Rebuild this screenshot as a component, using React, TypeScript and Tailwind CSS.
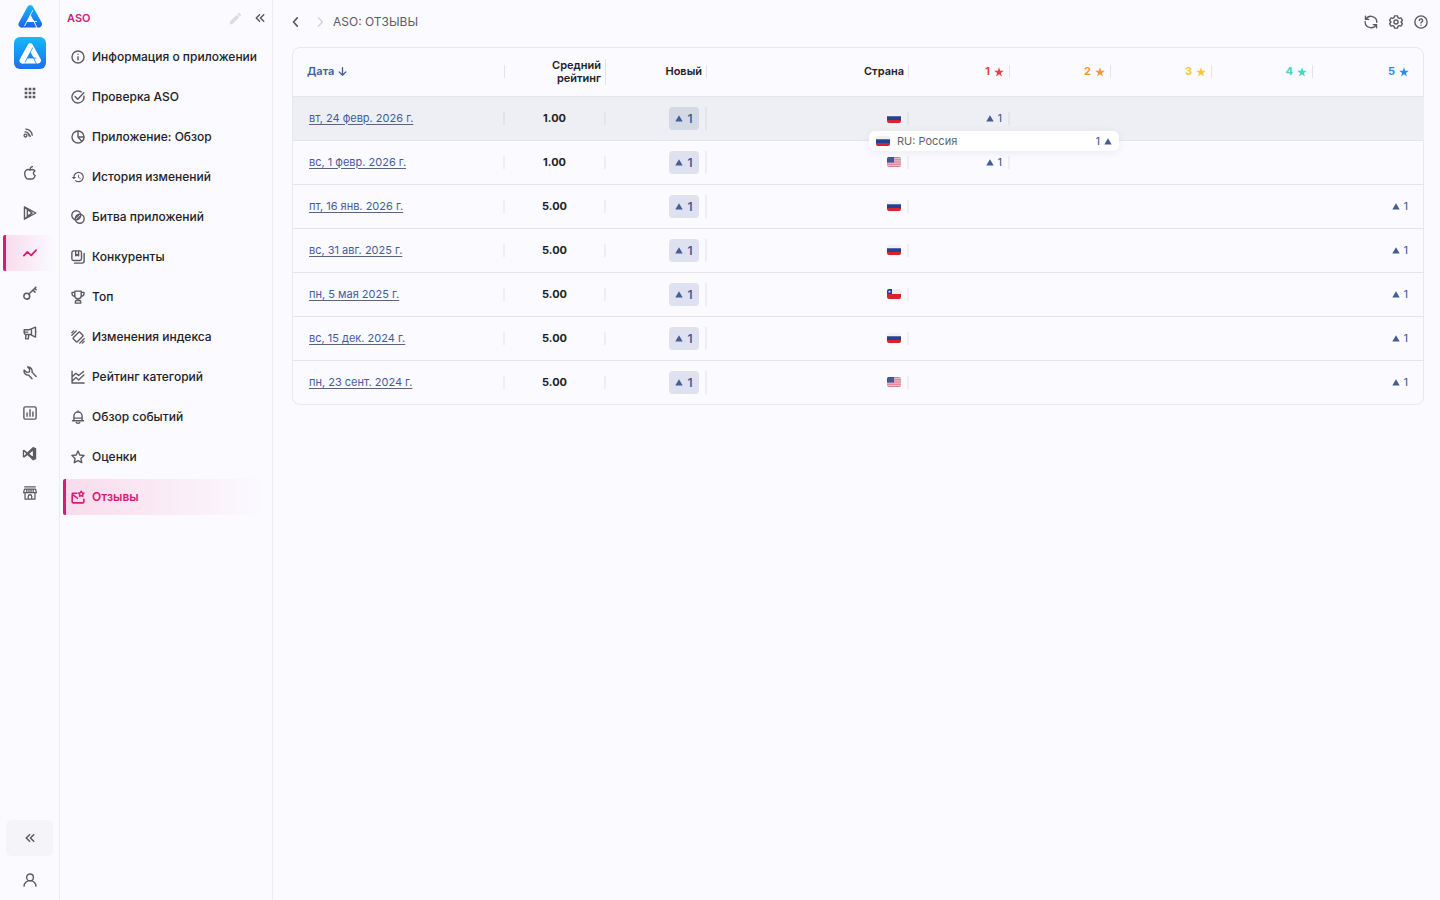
import React from "react";
import { MdHistory, MdApps, MdEdit } from "react-icons/md";
import { DiVisualstudio } from "react-icons/di";

type IconProps = { className?: string; children: React.ReactNode; width?: number };

function Icon({ className = "size-[14px]", children, width = 2.4 }: IconProps) {
  return (
    <svg
      viewBox="0 0 24 24"
      className={`${className} shrink-0`}
      fill="none"
      stroke="currentColor"
      strokeWidth={width}
      strokeLinecap="round"
      strokeLinejoin="round"
      aria-hidden="true"
    >
      {children}
    </svg>
  );
}

const navItems: { label: string; icon: React.ReactNode; active?: boolean }[] = [
  {
    label: "Информация о приложении",
    icon: (
      <Icon>
        <circle cx="12" cy="12" r="10.3" />
        <path d="M12 11.500v5.500M12 7v.4" />
      </Icon>
    ),
  },
  {
    label: "Проверка ASO",
    icon: (
      <Icon>
        <path d="M22.2 10.5A10.3 10.3 0 1 1 17.5 3.3" />
        <path d="m7 11 4.5 4.8L22 4.8" />
      </Icon>
    ),
  },
  {
    label: "Приложение: Обзор",
    icon: (
      <Icon>
        <circle cx="12" cy="12" r="10.3" />
        <path d="M12 2v10l6.500 7.500M12 12h10" />
      </Icon>
    ),
  },
  { label: "История изменений", icon: <MdHistory className="size-[14px] shrink-0" /> },
  {
    label: "Битва приложений",
    icon: (
      <Icon width={2.400}>
        <circle cx="9" cy="9" r="7.600" />
        <circle cx="15" cy="15" r="7.600" />
        <path d="m9 13 4-4M11.500 15l3.500-3.500" />
      </Icon>
    ),
  },
  {
    label: "Конкуренты",
    icon: (
      <Icon>
        <rect x="1.500" y="1.500" width="16.500" height="16.500" rx="3" />
        <path d="M22.500 6v13a3.500 3.500 0 0 1-3.500 3.500H6M8 2v8l2.500-2 2.500 2V2" />
      </Icon>
    ),
  },
  {
    label: "Топ",
    icon: (
      <Icon>
        <path d="M6.500 2h11v7.500a5.500 5.500 0 0 1-11 0zM6.500 4H1.800v2.500A4.500 4.500 0 0 0 7 11M17.500 4h4.700v2.500A4.500 4.500 0 0 1 17 11M12 15v3M7.500 22.500v-2.500a2 2 0 0 1 2-2h5a2 2 0 0 1 2 2v2.500z" />
      </Icon>
    ),
  },
  {
    label: "Изменения индекса",
    icon: (
      <Icon>
        <path d="M12.800 4.300a2 2 0 0 1 2.800 0l4.200 4.200a2 2 0 0 1 0 2.800l-8.500 8.500a2 2 0 0 1-2.800 0l-4.200-4.200a2 2 0 0 1 0-2.800zM1.500 9 9 1.500M1.500 4.500l3-3M15 22.500l7.500-7.500M19.500 22.500l3-3" />
      </Icon>
    ),
  },
  {
    label: "Рейтинг категорий",
    icon: (
      <Icon>
        <path d="M1.800 2v20.200H22.500M2.500 11l6-5.500 4.500 4L21.500 2.500M2.500 18.500l6-5.500 4.500 4 9-8.500" />
      </Icon>
    ),
  },
  {
    label: "Обзор событий",
    icon: (
      <Icon>
        <path d="M12 1.500v2M5 18v-7.500a7 7 0 0 1 14 0V18M2.500 18.500h19M5.500 14h13M9 21.500c1.500 1.500 4.500 1.500 6 0" />
      </Icon>
    ),
  },
  {
    label: "Оценки",
    icon: (
      <Icon>
        <path d="m12 1.800 3.100 6.700 7.300.9-5.400 5 1.400 7.300L12 18.100l-6.400 3.600L7 14.400l-5.400-5 7.300-.9z" />
      </Icon>
    ),
  },
  {
    label: "Отзывы",
    active: true,
    icon: (
      <Icon width={2.800}>
        <path d="M2 9.500V20a2 2 0 0 0 2 2h16a2 2 0 0 0 2-2v-4M10 5.500H3.500C2 5.500 1.500 7 2.800 8L11 14" />
        <path
          d="m17.500 2 1.500 2.700 3.300.6-2.300 2.400.4 3.300-2.900-1.400-2.900 1.400.4-3.300-2.300-2.400 3.300-.6z"
          strokeWidth="2.400"
        />
      </Icon>
    ),
  },
];

const railItems: { label: string; icon: React.ReactNode; active?: boolean }[] = [
  { label: "Приложения", icon: <MdApps className="size-4" /> },
  {
    label: "Лента",
    icon: (
      <Icon className="mr-1 size-[10px]" width={3.200}>
        <circle cx="6" cy="18" r="3.500" />
        <path d="M5 9.500A9 9 0 0 1 14.500 19M7 2.500A15.500 15.500 0 0 1 22 17.500M13 13l4.500 7" />
      </Icon>
    ),
  },
  {
    label: "App Store",
    icon: (
      <Icon>
        <path d="M12 7c-2-1.200-5-1.500-7 .5-3.500 3.500-2 10 .8 13.500 2 2.200 3.700 1.200 6.200 1.200s4.200 1 6.200-1.200c1.200-1.300 2.100-3 2.600-4.500-3.800-1.800-3.800-6.500-.3-8.200C18.500 5.700 14.500 5.800 12 7zM12 6c0-2.500 1.500-4.500 4-5" />
      </Icon>
    ),
  },
  {
    label: "Google Play",
    icon: (
      <Icon>
        <path d="M2.500 1.500v21L22 12zM3 2l12.500 10L3 22M7.500 6.500v11L15.500 12" />
      </Icon>
    ),
  },
  {
    label: "ASO",
    active: true,
    icon: (
      <Icon width={3}>
        <path d="m1.500 16.500 6-6.500 6.500 6 8.500-9" />
      </Icon>
    ),
  },
  {
    label: "Ключевые слова",
    icon: (
      <Icon width={2.600}>
        <circle cx="6.500" cy="17.500" r="5" />
        <path d="M10.200 13.800 22 2M17 7l3.500 3.500M20 4l2.500 2.500" />
      </Icon>
    ),
  },
  {
    label: "Реклама",
    icon: (
      <Icon>
        <path d="M2 6.500h8L21.500 2v17L12 14.500H5a3 3 0 0 1-3-3zM5 14.500 4.500 22H9l1-7.500M14.500 6v8.500M2 10.500h6M21.500 10h1" />
      </Icon>
    ),
  },
  {
    label: "Инструменты",
    icon: (
      <Icon>
        <path d="M15.500 22 9.500 15.500A6.800 6.800 0 0 1 2 7l4.500 4 4.500-1 .5-4.500L8 1.800a7 7 0 0 1 7.500 8.700l7 7.500" />
      </Icon>
    ),
  },
  {
    label: "Отчёты",
    icon: (
      <Icon>
        <rect x="1.500" y="1.500" width="21" height="21" rx="2.500" />
        <path d="M7 12v5.500M12 6.500v11M17 10v7.500" />
      </Icon>
    ),
  },
  { label: "Разработка", icon: <DiVisualstudio className="size-[19px]" /> },
  {
    label: "Магазин",
    icon: (
      <Icon width={2.200}>
        <path d="M3 1.500h18M2.500 5.500h19L23 11.500H1zM6.500 6v5M10.200 6v5M13.800 6v5M17.500 6v5M3.500 12v10.500h17V12M9 22v-4a3 3 0 0 1 6 0v4" />
      </Icon>
    ),
  },
];

function Logo({ fill, gap, className }: { fill: string; gap: string; className: string }) {
  return (
    <svg viewBox="0 0 48 46" className={className} fill="none" strokeLinecap="round" aria-hidden="true">
      <defs>
        <linearGradient id="logo-blue" gradientUnits="userSpaceOnUse" x1="0" y1="0" x2="0" y2="46">
          <stop offset="0" stopColor="#16b9fb" />
          <stop offset="1" stopColor="#1a63f2" />
        </linearGradient>
      </defs>
      <path d="M25 7 42 38" stroke={fill} strokeWidth="12" />
      <path d="M8 39h30" stroke={gap} strokeWidth="14" strokeLinecap="butt" />
      <path d="M8 39.500h33" stroke={fill} strokeWidth="11" />
      <path d="M24 7 7 39" stroke={gap} strokeWidth="15" strokeLinecap="butt" />
      <path d="M24 7 7 38.500" stroke={fill} strokeWidth="12" />
      <path d="m31 31 7 15" stroke={gap} strokeWidth="2" />
    </svg>
  );
}

function ChevronsLeft({ className }: { className: string }) {
  return (
    <Icon className={className} width={3.600}>
      <path d="m11 4-8 8 8 8M21 4l-8 8 8 8" />
    </Icon>
  );
}

function Flag({ code }: { code: string }) {
  return (
    <svg viewBox="0 0 14 10" className="h-[10px] w-[14px] shrink-0 rounded-xs" role="img" aria-label={code}>
      {code === "RU" && (
        <>
          <path fill="#f1f1f4" d="M0 0h14v3.300H0z" />
          <path fill="#24419a" d="M0 3.300h14v3.600H0z" />
          <path fill="#d8232c" d="M0 6.900h14V10H0z" />
        </>
      )}
      {code === "US" && (
        <>
          <path fill="#eecbd3" d="M0 0h14v10H0z" />
          <path stroke="#d56a7d" strokeWidth=".8" d="M0 .5h14M0 2.300h14M0 4.100h14M0 5.900h14M0 7.700h14M0 9.500h14" />
          <path fill="#3d4f8d" d="M0 0h7v5.500H0z" />
          <path stroke="#8c98c0" strokeWidth=".5" strokeDasharray=".6 .9" d="M.8 1.400h6M1.400 2.800h5.400M.8 4.200h6" />
        </>
      )}
      {code === "CL" && (
        <>
          <path fill="#ececf1" d="M0 0h14v5H0z" />
          <path fill="#d8232c" d="M0 5h14v5H0z" />
          <path fill="#24419a" d="M0 0h5v5H0z" />
          <path fill="#fff" d="m2.500 1.200.4 1h1l-.8.7.3 1-.9-.6-.9.6.3-1-.8-.7h1z" />
        </>
      )}
    </svg>
  );
}

function Up() {
  return (
    <svg viewBox="0 0 8 7" className="h-[7px] w-2 shrink-0" fill="#435d9b" aria-hidden="true">
      <path d="M4 .3 7.700 6.600H.3z" />
    </svg>
  );
}

function Star() {
  return (
    <svg viewBox="0 0 24 24" className="size-[10px] shrink-0" fill="currentColor" aria-hidden="true">
      <path d="m12 .8 2.800 8.100 8.700.2-6.900 5.200 2.500 8.300L12 17.600l-7.100 5 2.500-8.300L.5 9.100l8.700-.2z" />
    </svg>
  );
}

const stars = [
  { n: 1, color: "text-[#ea3f46]" },
  { n: 2, color: "text-[#fb9433]" },
  { n: 3, color: "text-[#fdc72b]" },
  { n: 4, color: "text-[#3fd8c3]" },
  { n: 5, color: "text-[#2f8af5]" },
];

const rows = [
  { date: "вт, 24 февр. 2026 г.", avg: 1, code: "RU", hover: true },
  { date: "вс, 1 февр. 2026 г.", avg: 1, code: "US" },
  { date: "пт, 16 янв. 2026 г.", avg: 5, code: "RU" },
  { date: "вс, 31 авг. 2025 г.", avg: 5, code: "RU" },
  { date: "пн, 5 мая 2025 г.", avg: 5, code: "CL" },
  { date: "вс, 15 дек. 2024 г.", avg: 5, code: "RU" },
  { date: "пн, 23 сент. 2024 г.", avg: 5, code: "US" },
];

function HeadCell({ children, className = "justify-end" }: { children: React.ReactNode; className?: string }) {
  return (
    <th scope="col" className="p-0 font-semibold">
      <div className={`flex items-center gap-1 border-r border-[#e3e3e9] pr-1 text-right ${className}`}>{children}</div>
    </th>
  );
}

function Cell({ children, className = "justify-end" }: { children: React.ReactNode; className?: string }) {
  return (
    <td className="p-0">
      <div className={`flex min-h-[13px] items-center gap-1 border-r-2 border-[#1c1f3a]/5 ${className}`}>{children}</div>
    </td>
  );
}

export default function App() {
  return (
    <div className="flex min-h-screen bg-[#fafaff] font-['Inter',sans-serif] text-[#212226]">
      <aside className="flex w-[60px] shrink-0 flex-col items-center border-r border-[#ececf2] text-[#5b5c62]">
        <a href="#" aria-label="Главная" className="mt-[5px]">
          <Logo fill="url(#logo-blue)" gap="#fafaff" className="h-[23px] w-6" />
        </a>
        <button
          aria-label="Текущее приложение"
          className="mt-[9px] flex size-8 items-center justify-center rounded-md bg-linear-to-b from-[#19b8f8] to-[#1c70ee]"
        >
          <Logo fill="#ffffff" gap="#1c92f4" className="h-[21px] w-[22px]" />
        </button>
        <nav aria-label="Разделы" className="mt-[6px] flex w-full flex-col gap-1 pr-[5px] pl-[3px]">
          {railItems.map((item) => (
            <a
              key={item.label}
              href="#"
              aria-label={item.label}
              className={`flex h-9 items-center justify-center border-l-[3px] pr-px ${
                item.active
                  ? "rounded-l-xs border-[#d81b74] bg-linear-to-r from-[#f9dcec] to-[#fafaff] text-[#d81b74]"
                  : "border-transparent"
              }`}
            >
              {item.icon}
            </a>
          ))}
        </nav>
        <button
          aria-label="Свернуть панель"
          className="mt-auto flex h-9 w-[47px] items-center justify-center rounded-md bg-[#f4f4f9]"
        >
          <ChevronsLeft className="size-[10px]" />
        </button>
        <button aria-label="Профиль" className="mt-[17px] mb-[13px]">
          <Icon>
            <circle cx="12" cy="7.500" r="5.800" />
            <path d="M1.800 22.500a10.200 9.500 0 0 1 20.400 0" />
          </Icon>
        </button>
      </aside>

      <aside className="w-[213px] shrink-0 border-r border-[#ececf2]">
        <div className="flex h-9 items-center pr-[7px] pl-[7px]">
          <h2 className="flex-1 text-[11px] font-semibold text-[#d81b74]">ASO</h2>
          <button aria-label="Редактировать" className="text-[#dcdce0]">
            <MdEdit className="size-[15px]" />
          </button>
          <button aria-label="Свернуть меню" className="ml-3 text-[#5b5c62]">
            <ChevronsLeft className="size-[10px]" />
          </button>
        </div>
        <nav aria-label="ASO" className="mt-[3px] flex flex-col gap-[4px] pr-2 pl-[3px]">
          {navItems.map((item) => (
            <a
              key={item.label}
              href="#"
              aria-current={item.active ? "page" : undefined}
              className={`flex h-9 items-center gap-[7px] border-l-[3px] pl-[5px] text-[12px] whitespace-nowrap ${
                item.active
                  ? "rounded-l-xs border-[#d81b74] bg-linear-to-r from-[#f9dcec] to-[#fafaff] font-semibold text-[#d81b74]"
                  : "border-transparent font-medium"
              }`}
            >
              <span className={item.active ? "" : "text-[#5b5c62]"}>{item.icon}</span>
              {item.label}
            </a>
          ))}
        </nav>
      </aside>

      <main className="min-w-0 flex-1 pr-4 pl-[19px]">
        <header className="-mr-1 flex h-[47px] items-center pb-1 text-[#5b5c62]">
          <button aria-label="Назад" className="-ml-px">
            <Icon className="size-[10px]" width={4}>
              <path d="m15 2-9 10 9 10" />
            </Icon>
          </button>
          <span className="ml-[14px] text-[#d3d3d9]">
            <Icon className="size-[10px]" width={3.400}>
              <path d="m8 2 10 10L8 22" />
            </Icon>
          </span>
          <h1 className="ml-2 flex-1 text-[12px]">ASO: ОТЗЫВЫ</h1>
          <div className="flex gap-[11px]">
            <button aria-label="Обновить">
              <Icon>
                <path d="M2.500 2v5.500H8M3.500 7A10 10 0 0 1 22 12.500M21.500 22v-5.500H16M20.500 17A10 10 0 0 1 2 11.500" />
              </Icon>
            </button>
            <button aria-label="Настройки">
              <Icon>
                <path d="M9.500 1.500h5l.8 3 2.200 1.300 3-.8L23 9.300 20.800 11.500v1L23 14.700 20.500 19l-3-.8-2.200 1.300-.8 3h-5l-.8-3-2.200-1.300-3 .8L1 14.700l2.200-2.200v-1L1 9.300 3.500 5l3 .8 2.200-1.300z" />
                <circle cx="12" cy="12" r="3.500" />
              </Icon>
            </button>
            <button aria-label="Помощь">
              <Icon>
                <circle cx="12" cy="12" r="10.500" />
                <path d="M9.200 9.500a2.800 2.800 0 1 1 4.300 2.400c-1 .6-1.500 1-1.500 2M12 17.300v.2" />
              </Icon>
            </button>
          </div>
        </header>

        <div className="rounded-lg border border-[#e8e8ee]">
          <table className="w-full table-fixed border-collapse text-[11px]">
            <colgroup>
              <col className="w-[212px]" />
              <col className="w-[101px]" />
              <col className="w-[101px]" />
              <col className="w-[202px]" />
              <col className="w-[101px]" />
              <col className="w-[101px]" />
              <col className="w-[101px]" />
              <col className="w-[101px]" />
              <col className="w-[111px]" />
            </colgroup>
            <thead>
              <tr className="h-12 border-b border-[#e4e4ea] leading-[13px]">
                <HeadCell className="text-[#435d9b]">
                  <button className="pl-[14px]">Дата</button>
                  <Icon className="size-[9px]" width={3.500}>
                    <path d="M12 2v20M3 13l9 9 9-9" />
                  </Icon>
                </HeadCell>
                <HeadCell>
                  Средний
                  <br />
                  рейтинг
                </HeadCell>
                <HeadCell>Новый</HeadCell>
                <HeadCell>Страна</HeadCell>
                {stars.map((s) => (
                  <th key={s.n} scope="col" className="p-0 font-bold">
                    <div
                      className={`flex items-center justify-end gap-1 ${s.color} ${
                        s.n === 5 ? "pr-[15px]" : "border-r border-[#e3e3e9] pr-[5px]"
                      }`}
                    >
                      {s.n} <Star />
                    </div>
                  </th>
                ))}
              </tr>
            </thead>
            <tbody>
              {rows.map((row) => (
                <tr
                  key={row.date}
                  className={`h-11 border-b border-[#e4e4ea] leading-[13px] last:border-b-0 ${row.hover ? "bg-[#eeeff4]" : ""}`}
                >
                  <Cell className="pl-4">
                    <a
                      href="#"
                      className="text-[#435d9b] underline decoration-[#5b6480] decoration-1 underline-offset-2"
                    >
                      {row.date}
                    </a>
                  </Cell>
                  <Cell className="justify-center font-bold">{row.avg.toFixed(2)}</Cell>
                  <Cell className="justify-end pr-[6px]">
                    <span className="flex h-[23px] w-[30px] items-center justify-center gap-1 rounded bg-[#435d9b]/15 text-[12px] font-semibold text-[#435d9b]">
                      <Up />1
                    </span>
                  </Cell>
                  <Cell className="justify-end pr-[6px]">
                    <span className="relative">
                      <Flag code={row.code} />
                      {row.hover && (
                        <div
                          role="tooltip"
                          className="absolute top-[18px] -left-[18px] z-10 flex h-5 w-[250px] items-center gap-[7px] rounded-md bg-white px-[7px] text-[11px] text-[#63646b] shadow-[0_2px_8px_rgba(60,60,110,0.08)]"
                        >
                          <Flag code="RU" />
                          <span className="flex-1">RU: Россия</span>
                          <span className="flex items-center gap-1 text-[10px] font-medium text-[#435d9b]">
                            1 <Up />
                          </span>
                        </div>
                      )}
                    </span>
                  </Cell>
                  {stars.map((s) => (
                    <td key={s.n} className="p-0">
                      {s.n === row.avg && (
                        <div
                          className={`flex items-center justify-end gap-1 text-[10px] font-medium text-[#435d9b] ${
                            s.n === 5 ? "pr-4" : "border-r-2 border-[#1c1f3a]/5 pr-[6px]"
                          }`}
                        >
                          <Up />1
                        </div>
                      )}
                    </td>
                  ))}
                </tr>
              ))}
            </tbody>
          </table>
        </div>
      </main>
    </div>
  );
}
